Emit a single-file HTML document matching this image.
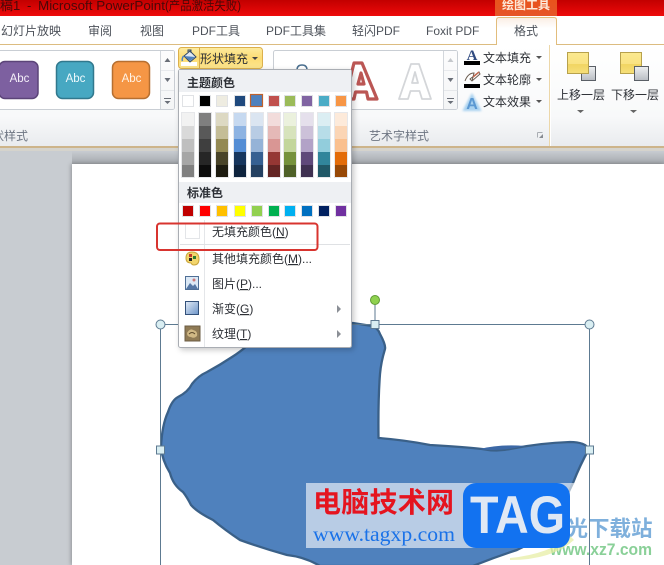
<!DOCTYPE html>
<html lang="zh"><head><meta charset="utf-8"><title>PowerPoint</title>
<style>
html,body{margin:0;padding:0;background:#fff;width:664px;height:565px;overflow:hidden}
svg{display:block;filter:blur(.3px)}
text{font-family:"Liberation Sans","Noto Sans CJK SC",sans-serif;font-size:12px;fill:#3f444c}
.tab{fill:#4d525a}
.m{fill:#2d3036}
.g{fill:#6e7683}
.u{text-decoration:underline}
</style></head><body>
<svg width="664" height="565" viewBox="0 0 664 565" xmlns="http://www.w3.org/2000/svg">
<defs>
<linearGradient id="red" x1="0" y1="0" x2="0" y2="1"><stop offset="0" stop-color="#c20000"/><stop offset="1" stop-color="#ee0a0a"/></linearGradient>
<linearGradient id="rib" x1="0" y1="0" x2="0" y2="1"><stop offset="0" stop-color="#fff"/><stop offset=".7" stop-color="#f8f9fa"/><stop offset="1" stop-color="#e9ebee"/></linearGradient>
<linearGradient id="top" x1="0" y1="0" x2="0" y2="1"><stop offset="0" stop-color="#a5a9ae" stop-opacity="0"/><stop offset="1" stop-color="#a3a7ac"/></linearGradient>
<linearGradient id="btn" x1="0" y1="0" x2="0" y2="1"><stop offset="0" stop-color="#fdeb9f"/><stop offset=".5" stop-color="#fcdc74"/><stop offset="1" stop-color="#fbe58e"/></linearGradient>
<linearGradient id="tool" x1="0" y1="0" x2="0" y2="1"><stop offset="0" stop-color="#e9531c"/><stop offset="1" stop-color="#e5562a"/></linearGradient>
<linearGradient id="fmt" x1="0" y1="0" x2="0" y2="1"><stop offset="0" stop-color="#fbeee3"/><stop offset=".4" stop-color="#fff"/></linearGradient>
<linearGradient id="yel" x1="0" y1="0" x2="0" y2="1"><stop offset="0" stop-color="#fbe98f"/><stop offset=".55" stop-color="#f9e282"/><stop offset=".56" stop-color="#f1d562"/><stop offset="1" stop-color="#f6df7a"/></linearGradient>
<linearGradient id="gry" x1="0" y1="0" x2="0" y2="1"><stop offset="0" stop-color="#eef0f2"/><stop offset="1" stop-color="#b9bdc3"/></linearGradient>
<linearGradient id="grad" x1="0" y1="0" x2="1" y2="1"><stop offset="0" stop-color="#e3ecf7"/><stop offset="1" stop-color="#6c94c8"/></linearGradient>
<linearGradient id="ssb" x1="0" y1="0" x2="0" y2="1"><stop offset="0" stop-color="#fbfbfc"/><stop offset="1" stop-color="#eceef0"/></linearGradient>
<filter id="sh" x="-10%" y="-10%" width="125%" height="120%"><feDropShadow dx="2" dy="2" stdDeviation="3" flood-color="#000" flood-opacity=".22"/></filter>
<filter id="sl" x="-5%" y="-5%" width="110%" height="110%"><feDropShadow dx="-1" dy="0" stdDeviation="2" flood-color="#000" flood-opacity=".28"/></filter>
<filter id="gl" x="-30%" y="-30%" width="160%" height="160%"><feGaussianBlur stdDeviation="1"/></filter>
</defs>

<!-- title bar -->
<rect width="664" height="16" fill="url(#red)"/>
<text x="0" y="10" style="fill:#4a0808;font-size:13px">稿1</text>
<text x="27" y="10" style="fill:#4a0808;font-size:13px">-</text>
<text x="38" y="10" textLength="127" lengthAdjust="spacingAndGlyphs" style="fill:#4a0808;font-size:13px">Microsoft PowerPoint</text>
<text x="165" y="10" textLength="76" lengthAdjust="spacingAndGlyphs" style="fill:#4a0808;font-size:12.500px">(产品激活失败)</text>
<rect x="495" y="0" width="62" height="17" fill="url(#tool)"/>
<text x="526" y="9" text-anchor="middle" style="fill:#fde9d8;font-size:12px;font-weight:bold">绘图工具</text>

<!-- tabs -->
<rect y="16" width="664" height="28" fill="#fff"/>
<text class="tab" x="1" y="35">幻灯片放映</text>
<text class="tab" x="88" y="35">审阅</text>
<text class="tab" x="140" y="35">视图</text>
<text class="tab" x="192" y="35">PDF工具</text>
<text class="tab" x="266" y="35">PDF工具集</text>
<text class="tab" x="352" y="35">轻闪PDF</text>
<text class="tab" x="426" y="35">Foxit PDF</text>

<!-- ribbon -->
<rect y="45" width="664" height="101" fill="url(#rib)"/>
<rect y="44" width="664" height="1" fill="#dcbc80"/>
<rect y="146" width="664" height="2" fill="#cdb48a"/>
<path d="M496.500 44.500 V20 Q496.500 17.500 499 17.500 H554 Q556.500 17.500 556.500 20 V44.500" fill="url(#fmt)" stroke="#e2bd7c"/>
<rect x="497" y="43" width="59" height="3" fill="#fff"/>
<text class="tab" x="514" y="35">格式</text>

<!-- shape gallery -->
<rect x="-2" y="50.500" width="176.500" height="59" rx="2" fill="#fff" stroke="#c9ced4"/>
<path d="M160.500 51 V109 M161 70.500 H174 M161 90.500 H174" stroke="#d3d7dc" fill="none"/>
<rect x="161" y="51" width="13" height="58" fill="url(#ssb)" opacity=".6"/>
<path d="M167.500 58 l-3 4 h6z M164.500 78 h6 l-3 4z M164 98 h7 v1 h-7z M164.500 101 h6 l-3 3z" fill="#6a6f78"/>
<rect x="-1" y="61.500" width="39" height="37" rx="6" fill="#7d60a0" stroke="#5b4478" stroke-width="1.500"/>
<rect x="56.500" y="61.500" width="37" height="37" rx="6" fill="#47a8c2" stroke="#31788d" stroke-width="1.500"/>
<rect x="112.500" y="61.500" width="37" height="37" rx="6" fill="#f59645" stroke="#b66f30" stroke-width="1.500"/>
<text x="19.500" y="82" text-anchor="middle" style="fill:#f4eff8;font-size:11.500px">Abc</text>
<text x="75.500" y="82" text-anchor="middle" style="fill:#eef9fc;font-size:11.500px">Abc</text>
<text x="131.500" y="82" text-anchor="middle" style="fill:#fff3e6;font-size:11.500px">Abc</text>
<text class="g" x="-8" y="140">状样式</text>

<!-- shape fill button -->
<rect x="178.500" y="47.500" width="84" height="21" rx="3" fill="url(#btn)" stroke="#dcb04c"/>
<path d="M199.500 48 V68" stroke="#d6ab4a"/>
<rect x="181" y="62" width="16" height="4" fill="#fff"/>
<path d="M184 56 l6 -5 l6 6 l-6 5z" fill="#dfe8f3" stroke="#2f4666"/>
<path d="M188 52 v-2 h3 v3" fill="none" stroke="#2f4666"/>
<path d="M184 56 l6 5 l5 -4z" fill="#4f81bd"/>
<path d="M183.500 56 q-2 3 -1 5" stroke="#4f81bd" stroke-width="1.500" fill="none"/>
<text class="m" x="200" y="63">形状填充</text>
<path d="M252 57 h6 l-3 3z" fill="#444"/>

<!-- wordart gallery -->
<rect x="273.500" y="50.500" width="184" height="59" rx="2" fill="#fff" stroke="#c9ced4"/>
<path d="M443.500 51 V109 M444 70.500 H458 M444 90.500 H458" stroke="#d3d7dc" fill="none"/>
<rect x="444" y="51" width="13" height="58" fill="url(#ssb)" opacity=".6"/>
<path d="M450.500 58 l-3 4 h6z" fill="#c5c8cc"/>
<path d="M447.500 78 h6 l-3 4z M447 98 h7 v1 h-7z M447.500 101 h6 l-3 3z" fill="#6a6f78"/>
<path d="M297 70 q0 -5 5 -5 q5 0 5 5" fill="none" stroke="#4a6f8f" stroke-width="1.500"/>
<path d="M362 63 h-8 L345 99 h9 l1.500 -7 h11 l1.500 7 h9 z M358 84 l3 -11 l3 11z" fill="#fff" stroke="#bb5654" stroke-width="3.200" stroke-linejoin="round"/>
<path d="M419 64 h-8 L399 99 h9 l2.500 -8 h9 l2.500 8 h9z M412 83 l3 -11 l3 11z" fill="#fff" stroke="#d4d6d9" stroke-width="1.800" stroke-linejoin="round"/>
<text class="g" x="369" y="140">艺术字样式</text>
<path d="M537.500 132.500 h5 M537.500 132.500 v5" stroke="#a9adb3" fill="none"/>
<path d="M543 134 v4 h-4z" fill="#878b92"/>

<!-- text tools -->
<text x="472" y="60" text-anchor="middle" style="fill:#2f4a80;font-family:'Liberation Serif',serif;font-weight:bold;font-size:15px">A</text>
<rect x="464" y="61" width="16" height="4" fill="#000"/>
<text class="m" x="483" y="62">文本填充</text>
<path d="M536 56 h6 l-3 3z" fill="#555"/>
<path d="M465 81 q3 -8 9 -8 l-2 8 M470 79 l9 -7 l1 2 l-8 7z" fill="#fff" stroke="#6a5d50"/>
<path d="M473 77 l6 -5" stroke="#c06a50" stroke-width="1.500"/>
<rect x="464" y="84" width="16" height="4" fill="#000"/>
<text class="m" x="483" y="84">文本轮廓</text>
<path d="M536 78 h6 l-3 3z" fill="#555"/>
<path d="M472 95 L464 110 h16 z" fill="#a9d2f0" stroke="#a9d2f0" stroke-width="2" filter="url(#gl)"/>
<text x="472" y="109" text-anchor="middle" style="fill:#5b98d2;font-weight:bold;font-size:16px">A</text>
<text class="m" x="483" y="106">文本效果</text>
<path d="M536 100 h6 l-3 3z" fill="#555"/>

<!-- arrange -->
<rect x="549" y="45" width="1" height="101" fill="#ecd7a9"/>
<rect x="550" y="45" width="1" height="101" fill="#fff"/>
<rect x="581.500" y="66.500" width="14" height="14" fill="url(#gry)" stroke="#5a5f66"/>
<rect x="567.500" y="52.500" width="21" height="21" fill="url(#yel)" stroke="#b7a14c"/>
<text class="m" x="557" y="99">上移一层</text>
<path d="M577 110 h7 l-3.500 3z" fill="#666"/>
<rect x="620.500" y="52.500" width="21" height="21" fill="url(#yel)" stroke="#b7a14c"/>
<rect x="634.500" y="66.500" width="14" height="14" fill="url(#gry)" stroke="#5a5f66"/>
<text class="m" x="611" y="99">下移一层</text>
<path d="M630 110 h7 l-3.500 3z" fill="#666"/>

<!-- workspace -->
<rect y="148" width="664" height="417" fill="#c8ccd1"/>
<rect y="148" width="664" height="3" fill="#d5d3cc"/>
<rect x="72" y="151" width="592" height="13" fill="url(#top)"/>
<rect x="72" y="164" width="592" height="401" fill="#fff" filter="url(#sl)"/>

<!-- shape -->
<path d="M353 323 L372 326 Q378 328 380 334 Q386 345 385 349 Q381 362 380 374 Q378 400 378.500 438 Q405 440 430 445 Q465 447 482 449 Q497 452 510 449 Q540 443 570 442 Q585 442 589 449 Q580 465 573 483 L560 510 Q540 540 517 550 Q495 557 473 566 L320 566 Q305 557 287 555 Q262 548 240 540 Q225 530 213 520 Q197 512 191 505 Q187 497 183 492 Q173 485 170 473 Q162 460 161 447 Q162 425 168 412 Q172 400 178 397 Q188 392 192 384 Q198 376 207 372 Q220 365 232 357 Q240 352 248 345 L270 322 Z" fill="#4f81bd" stroke="#3a6088" stroke-width="2.300" stroke-linejoin="round"/>
<path d="M480 449 Q497 452 525 446 Q500 444 480 449Z" fill="#3c68a6"/>

<!-- selection -->
<path d="M160.500 324.500 H589.500 M160.500 324.500 V565 M589.500 324.500 V565 M375 324 V300" stroke="#5d7a91" fill="none"/>
<circle cx="375" cy="300" r="4.500" fill="#8fd14f" stroke="#5f9a35"/>
<g fill="#d9eef2" stroke="#5d7a91">
<circle cx="160.500" cy="324.500" r="4.500"/><circle cx="589.500" cy="324.500" r="4.500"/>
<rect x="371" y="320.500" width="8" height="8"/><rect x="156.500" y="446" width="8" height="8"/><rect x="585.500" y="446" width="8" height="8"/>
</g>

<!-- menu -->
<g filter="url(#sh)"><rect x="178.500" y="69.500" width="173" height="278" rx="2" fill="#fff" stroke="#a9adb3"/></g>
<rect x="179" y="70" width="172" height="22" fill="#eef0f3"/>
<rect x="179" y="182" width="172" height="21" fill="#eef0f3"/>
<text x="187" y="87" style="fill:#2d3036;font-weight:bold;font-size:12px">主题颜色</text>
<text x="187" y="197" style="fill:#2d3036;font-weight:bold;font-size:12px">标准色</text>

<!-- theme row -->
<g stroke="#e0e2e5" stroke-width="1">
<rect x="182.500" y="95.500" width="11" height="11" fill="#ffffff"/>
<rect x="199.500" y="95.500" width="11" height="11" fill="#000000"/>
<rect x="216.500" y="95.500" width="11" height="11" fill="#eeece1"/>
<rect x="234.500" y="95.500" width="11" height="11" fill="#1f497d"/>
<rect x="268.500" y="95.500" width="11" height="11" fill="#c0504d"/>
<rect x="284.500" y="95.500" width="11" height="11" fill="#9bbb59"/>
<rect x="301.500" y="95.500" width="11" height="11" fill="#8064a2"/>
<rect x="318.500" y="95.500" width="11" height="11" fill="#4bacc6"/>
<rect x="335.500" y="95.500" width="11" height="11" fill="#f79646"/>
</g>
<rect x="250.500" y="94.500" width="12" height="12" fill="#4f81bd" stroke="#c0622c" stroke-width="1.200"/>

<!-- tint columns -->
<g stroke="none">
<rect x="182" y="113" width="12" height="13" fill="#f2f2f2"/><rect x="182" y="126" width="12" height="13" fill="#d9d9d9"/><rect x="182" y="139" width="12" height="13" fill="#bfbfbf"/><rect x="182" y="152" width="12" height="13" fill="#a6a6a6"/><rect x="182" y="165" width="12" height="12" fill="#808080"/>
<rect x="199" y="113" width="12" height="13" fill="#7f7f7f"/><rect x="199" y="126" width="12" height="13" fill="#595959"/><rect x="199" y="139" width="12" height="13" fill="#3f3f3f"/><rect x="199" y="152" width="12" height="13" fill="#262626"/><rect x="199" y="165" width="12" height="12" fill="#0d0d0d"/>
<rect x="216" y="113" width="12" height="13" fill="#ddd9c3"/><rect x="216" y="126" width="12" height="13" fill="#c4bd97"/><rect x="216" y="139" width="12" height="13" fill="#938953"/><rect x="216" y="152" width="12" height="13" fill="#494429"/><rect x="216" y="165" width="12" height="12" fill="#1d1b10"/>
<rect x="234" y="113" width="12" height="13" fill="#c6d9f0"/><rect x="234" y="126" width="12" height="13" fill="#8db3e2"/><rect x="234" y="139" width="12" height="13" fill="#548dd4"/><rect x="234" y="152" width="12" height="13" fill="#17365d"/><rect x="234" y="165" width="12" height="12" fill="#0f243e"/>
<rect x="251" y="113" width="12" height="13" fill="#dbe5f1"/><rect x="251" y="126" width="12" height="13" fill="#b8cce4"/><rect x="251" y="139" width="12" height="13" fill="#95b3d7"/><rect x="251" y="152" width="12" height="13" fill="#366092"/><rect x="251" y="165" width="12" height="12" fill="#244061"/>
<rect x="268" y="113" width="12" height="13" fill="#f2dcdb"/><rect x="268" y="126" width="12" height="13" fill="#e5b9b7"/><rect x="268" y="139" width="12" height="13" fill="#d99694"/><rect x="268" y="152" width="12" height="13" fill="#953734"/><rect x="268" y="165" width="12" height="12" fill="#632423"/>
<rect x="284" y="113" width="12" height="13" fill="#ebf1dd"/><rect x="284" y="126" width="12" height="13" fill="#d7e3bc"/><rect x="284" y="139" width="12" height="13" fill="#c3d69b"/><rect x="284" y="152" width="12" height="13" fill="#76923c"/><rect x="284" y="165" width="12" height="12" fill="#4f6128"/>
<rect x="301" y="113" width="12" height="13" fill="#e5e0ec"/><rect x="301" y="126" width="12" height="13" fill="#ccc1d9"/><rect x="301" y="139" width="12" height="13" fill="#b2a2c7"/><rect x="301" y="152" width="12" height="13" fill="#5f497a"/><rect x="301" y="165" width="12" height="12" fill="#3f3151"/>
<rect x="318" y="113" width="12" height="13" fill="#dbeef3"/><rect x="318" y="126" width="12" height="13" fill="#b7dde8"/><rect x="318" y="139" width="12" height="13" fill="#92cddc"/><rect x="318" y="152" width="12" height="13" fill="#31859b"/><rect x="318" y="165" width="12" height="12" fill="#205867"/>
<rect x="335" y="113" width="12" height="13" fill="#fdeada"/><rect x="335" y="126" width="12" height="13" fill="#fbd5b5"/><rect x="335" y="139" width="12" height="13" fill="#fac08f"/><rect x="335" y="152" width="12" height="13" fill="#e36c09"/><rect x="335" y="165" width="12" height="12" fill="#974806"/>
</g>
<g fill="none" stroke="#e6e7ea">
<rect x="181.500" y="112.500" width="13" height="65"/><rect x="198.500" y="112.500" width="13" height="65"/><rect x="215.500" y="112.500" width="13" height="65"/><rect x="233.500" y="112.500" width="13" height="65"/><rect x="250.500" y="112.500" width="13" height="65"/><rect x="267.500" y="112.500" width="13" height="65"/><rect x="283.500" y="112.500" width="13" height="65"/><rect x="300.500" y="112.500" width="13" height="65"/><rect x="317.500" y="112.500" width="13" height="65"/><rect x="334.500" y="112.500" width="13" height="65"/>
</g>

<!-- standard row -->
<g stroke="#e0e2e5">
<rect x="182.500" y="205.500" width="11" height="11" fill="#c00000"/>
<rect x="199.500" y="205.500" width="11" height="11" fill="#ff0000"/>
<rect x="216.500" y="205.500" width="11" height="11" fill="#ffc000"/>
<rect x="234.500" y="205.500" width="11" height="11" fill="#ffff00"/>
<rect x="251.500" y="205.500" width="11" height="11" fill="#92d050"/>
<rect x="268.500" y="205.500" width="11" height="11" fill="#00b050"/>
<rect x="284.500" y="205.500" width="11" height="11" fill="#00b0f0"/>
<rect x="301.500" y="205.500" width="11" height="11" fill="#0070c0"/>
<rect x="318.500" y="205.500" width="11" height="11" fill="#002060"/>
<rect x="335.500" y="205.500" width="11" height="11" fill="#7030a0"/>
</g>

<!-- menu items -->
<rect x="204" y="220" width="1" height="127" fill="#e4e6e9"/>
<rect x="185.500" y="223.500" width="14" height="15" fill="#fff" stroke="#e3e5e8"/>
<rect x="180" y="244" width="170" height="1" fill="#dfe1e4"/>
<text class="m" x="212" y="236">无填充颜色(<tspan class="u">N</tspan>)</text>
<text class="m" x="212" y="263">其他填充颜色(<tspan class="u">M</tspan>)...</text>
<text class="m" x="212" y="288">图片(<tspan class="u">P</tspan>)...</text>
<text class="m" x="212" y="313">渐变(<tspan class="u">G</tspan>)</text>
<text class="m" x="212" y="338">纹理(<tspan class="u">T</tspan>)</text>
<path d="M337 305 v8 l4 -4z M337 330 v8 l4 -4z" fill="#8b8f96"/>

<!-- menu icons -->
<path d="M186 258 q0 -6 6 -6 q7 0 7 7 q0 6 -5 6 q-2 0 -3 -2 q-5 0 -5 -5z" fill="#f2d56c" stroke="#c9a53c"/>
<rect x="189" y="254" width="3" height="3" fill="#c0392b"/><rect x="193" y="256" width="3" height="3" fill="#2e7d32"/><rect x="189" y="258" width="3" height="3" fill="#222"/>
<rect x="185.500" y="276.500" width="13" height="13" fill="#dbe8f5" stroke="#4f6f96"/>
<path d="M186 289 l4 -6 l3 3 l2 -2 l3 5z" fill="#5577a5"/><circle cx="194" cy="280" r="1.500" fill="#c77"/>
<rect x="185.500" y="301.500" width="13" height="13" fill="url(#grad)" stroke="#33517a"/>
<rect x="185" y="326" width="15" height="15" fill="#8f7a55" stroke="#6b5c44"/>
<path d="M187 333 q3 -5 6 -3 q5 1 4 6 q-3 3 -6 1 q-4 0 -4 -4z" fill="#d0b885"/>
<path d="M189 334 q3 -3 6 0" stroke="#5d4a2c" fill="none"/>

<!-- highlight -->
<rect x="157" y="223.500" width="160.500" height="26.500" rx="3" fill="none" stroke="#d8342f" stroke-width="2"/>

<!-- watermark -->
<rect x="306" y="483" width="268" height="65" fill="#fff" opacity=".6"/>
<text x="545" y="536" style="fill:#7fb0dc;font-size:21.500px;font-weight:bold">极光下载站</text>
<text x="550" y="555" textLength="102" lengthAdjust="spacingAndGlyphs" style="fill:#8ad098;font-size:17px;font-weight:bold">www.xz7.com</text>
<path d="M510 558 q40 -4 60 -22 l4 4 q-22 20 -64 20z" fill="#e6eda0" opacity=".7"/>
<path d="M589.500 480 V565" stroke="#5d7a91"/>
<rect x="463" y="483" width="107" height="65" rx="13" fill="#1272f0"/>
<text x="470" y="533" textLength="95" lengthAdjust="spacingAndGlyphs" style="fill:#dfe8f4;font-size:53px;font-weight:bold">TAG</text>
<text x="313" y="512" textLength="141" style="fill:#e5141f;font-size:28px;font-weight:bold">电脑技术网</text>
<text x="313" y="541" textLength="142" lengthAdjust="spacingAndGlyphs" style="fill:#1a72e8;font-size:21.500px;font-family:'Liberation Serif',serif">www.tagxp.com</text>
</svg>
</body></html>
